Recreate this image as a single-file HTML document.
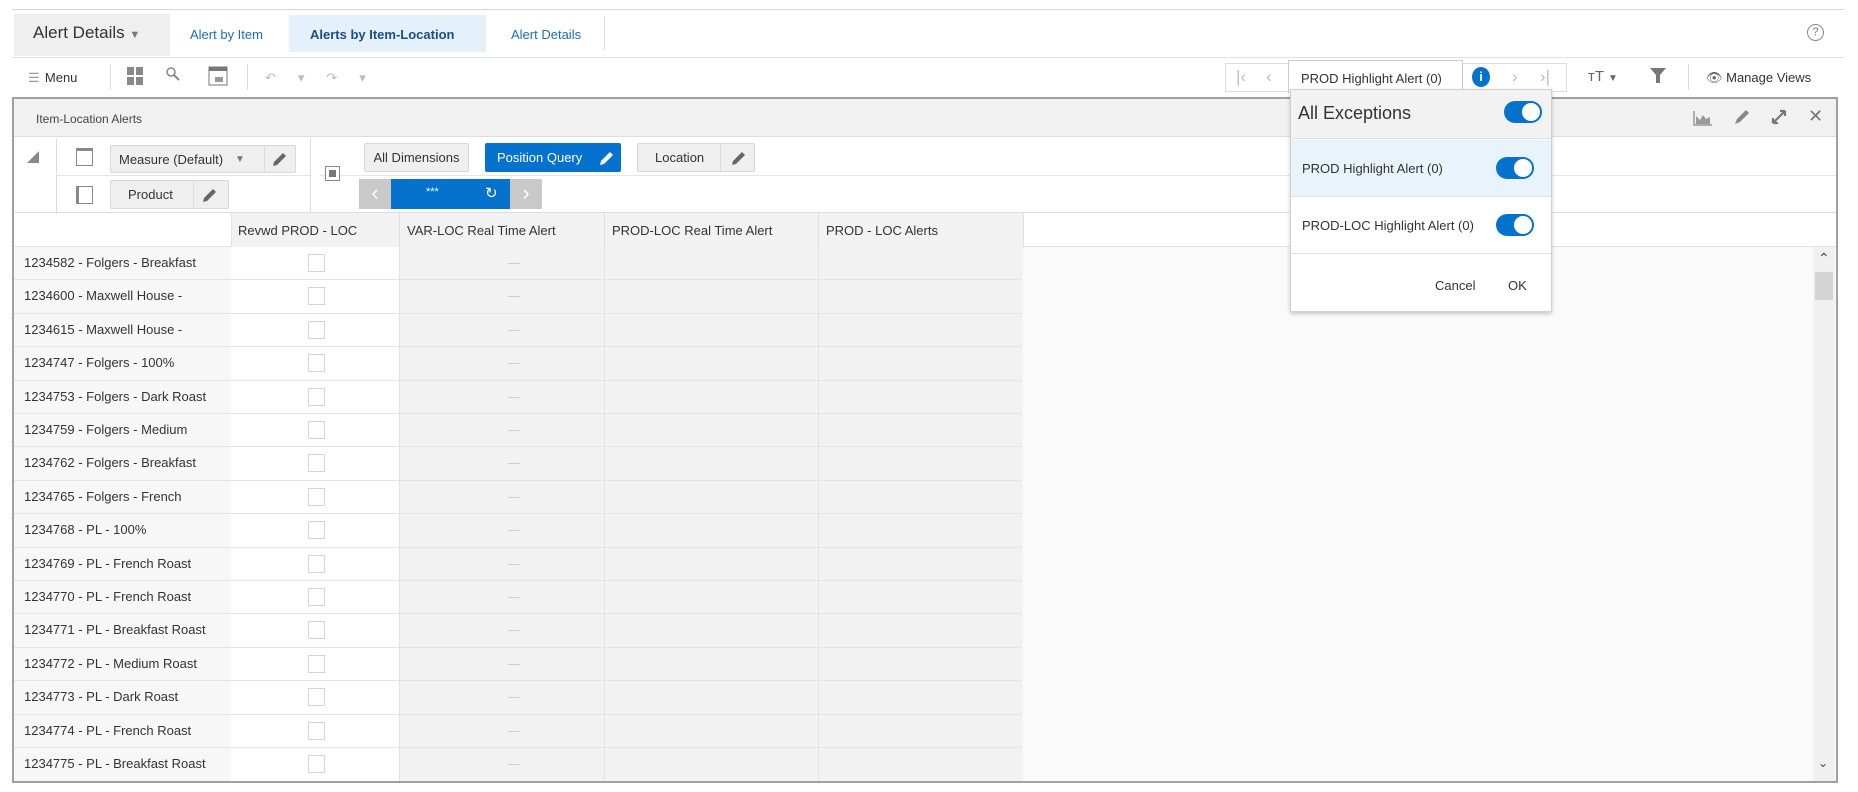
<!DOCTYPE html>
<html><head><meta charset="utf-8"><style>
*{box-sizing:border-box;margin:0;padding:0}
body{width:1858px;height:792px;background:#fff;font-family:"Liberation Sans",sans-serif;color:#333;position:relative;overflow:hidden;font-size:13px}
.a{position:absolute}
.btn{position:absolute;background:#efefef;border:1px solid #d8d8d8;border-radius:2px;font-size:13px;color:#333;display:flex;align-items:center}
.row{position:absolute;left:14px;height:33.4px;width:1008px;border-bottom:1px solid #e4e4e4}
.rh{position:absolute;left:0;top:0;width:217px;height:100%;background:#f7f7f7;padding:8px 0 0 10px;font-size:13px;color:#333;white-space:nowrap;overflow:hidden}
.c1{position:absolute;left:217px;width:168px;height:100%;background:#fff}
.cb{position:absolute;left:294px;top:7px;width:17px;height:18px;border:1px solid #d4d4d4;background:#fff}
.g{position:absolute;height:100%;background:#f2f2f2;border-left:1px solid #e2e2e2}
.dash{position:absolute;left:494px;top:16px;width:12px;height:1px;background:#cfcfcf}
.tog{position:absolute;width:38px;height:22px;border-radius:11px;background:#0572ce}
.tog:after{content:"";position:absolute;right:2px;top:2px;width:18px;height:18px;border-radius:50%;background:#fff}
</style></head><body>
<!-- top tab bar -->
<div class="a" style="left:12px;top:9px;width:1832px;height:1px;background:#d6d6d6"></div>
<div class="a" style="left:14px;top:14px;width:156px;height:42px;background:#efefef"></div>
<div class="a" style="left:33px;top:23px;font-size:17px;color:#333">Alert Details <span style="font-size:11px;color:#777">▼</span></div>
<div class="a" style="left:190px;top:27px;font-size:13px;color:#1a6fb5">Alert by Item</div>
<div class="a" style="left:289px;top:15px;width:197px;height:37px;background:#e4f0fa"></div>
<div class="a" style="left:310px;top:27px;font-size:13px;font-weight:bold;color:#1a4f80">Alerts by Item-Location</div>
<div class="a" style="left:511px;top:27px;font-size:13px;color:#1a6fb5">Alert Details</div>
<div class="a" style="left:604px;top:16px;width:1px;height:34px;background:#ddd"></div>
<div class="a" style="left:1807px;top:24px;width:17px;height:17px;border:1px solid #888;border-radius:50%;font-size:11px;text-align:center;line-height:15px;color:#777">?</div>
<div class="a" style="left:12px;top:57px;width:1832px;height:1px;background:#e0e0e0"></div>
<!-- toolbar -->
<div class="a" style="left:28px;top:70px;font-size:13px;color:#333"><span style="color:#999;letter-spacing:-2px">☰</span> &nbsp;Menu</div>
<div class="a" style="left:110px;top:64px;width:1px;height:26px;background:#ddd"></div>
<svg class="a" style="left:126px;top:66px" width="18" height="20"><rect x="1" y="1" width="7" height="8" fill="#888"/><rect x="10" y="1" width="7" height="8" fill="#888"/><rect x="1" y="11" width="7" height="8" fill="#888"/><rect x="10" y="11" width="7" height="8" fill="#888"/></svg>
<svg class="a" style="left:166px;top:67px" width="14" height="14"><circle cx="5" cy="5" r="4" fill="none" stroke="#888" stroke-width="1.5"/><line x1="8" y1="8" x2="13" y2="13" stroke="#888" stroke-width="2"/></svg>
<svg class="a" style="left:208px;top:66px" width="20" height="20"><rect x="1" y="1" width="18" height="18" fill="#fff" stroke="#777"/><rect x="1" y="1" width="18" height="4" fill="#777"/><rect x="7" y="11" width="8" height="5" fill="#999"/></svg>
<div class="a" style="left:247px;top:64px;width:1px;height:26px;background:#ddd"></div>
<div class="a" style="left:265px;top:70px;font-size:13px;color:#bbb;letter-spacing:22px">↶▾↷▾</div>
<!-- right nav -->
<div class="a" style="left:1225px;top:63px;width:342px;height:29px;border:1px solid #ddd;background:#fff"></div>
<div class="a" style="left:1236px;top:67px;font-size:17px;color:#bbb">|‹</div>
<div class="a" style="left:1266px;top:67px;font-size:17px;color:#bbb">‹</div>
<div class="a" style="left:1288px;top:60px;width:175px;height:33px;border:1px solid #ccc;border-bottom:none;background:#fff;font-size:13px;padding:10px 0 0 12px">PROD Highlight Alert (0)</div>
<div class="a" style="left:1472px;top:67px;width:18px;height:20px;border-radius:50%;background:#0572ce;color:#fff;font-size:13px;font-weight:bold;text-align:center;line-height:20px">i</div>
<div class="a" style="left:1512px;top:67px;font-size:17px;color:#bbb">›</div>
<div class="a" style="left:1540px;top:67px;font-size:17px;color:#bbb">›|</div>
<div class="a" style="left:1588px;top:68px;font-size:15px;color:#666">ᴛT <span style="font-size:10px">▼</span></div>
<svg class="a" style="left:1650px;top:68px" width="16" height="16"><path d="M0 0H16L10 7V15H6V7Z" fill="#777"/></svg>
<div class="a" style="left:1688px;top:64px;width:1px;height:26px;background:#ddd"></div>
<div class="a" style="left:1706px;top:70px;font-size:13px;color:#333"><span style="color:#666">👁</span> Manage Views</div>
<!-- panel -->
<div class="a" style="left:12px;top:97px;width:1826px;height:686px;border:2px solid #a0a0a0;background:#fafafa"></div>
<div class="a" style="left:14px;top:99px;width:1822px;height:38px;background:#f1f1f1;border-bottom:1px solid #ddd"></div>
<div class="a" style="left:36px;top:112px;font-size:12px;color:#444">Item-Location Alerts</div>
<svg class="a" style="left:1693px;top:110px" width="20" height="16"><path d="M1 1V15H19" stroke="#999" fill="none" stroke-width="1.5"/><path d="M3 14V6L7 10L10 5L13 9L17 7V14Z" fill="#999"/></svg>
<svg class="a" style="left:1733px;top:108px" width="18" height="18"><path d="M2 16L4 11L13 2L16 5L7 14Z" fill="#888"/></svg>
<svg class="a" style="left:1770px;top:108px" width="18" height="18"><path d="M3 15L15 3M15 3H10M15 3V8M3 15H8M3 15V10" stroke="#777" stroke-width="2.2" fill="none"/></svg>
<div class="a" style="left:1808px;top:106px;font-size:18px;color:#777">✕</div>
<!-- pivot area -->
<div class="a" style="left:14px;top:137px;width:1822px;height:76px;background:#fff;border-bottom:1px solid #ddd"></div>
<div class="a" style="left:27px;top:151px;width:0;height:0;border-left:12px solid transparent;border-bottom:12px solid #888"></div>
<div class="a" style="left:56px;top:138px;width:1px;height:75px;background:#ddd"></div>
<div class="a" style="left:310px;top:138px;width:1px;height:75px;background:#ddd"></div>
<div class="a" style="left:56px;top:175px;width:254px;height:1px;background:#e5e5e5"></div>
<div class="a" style="left:320px;top:175px;width:1516px;height:1px;background:#e5e5e5"></div>
<div class="a" style="left:76px;top:148px;width:17px;height:18px;border:1px solid #888;border-top:3px solid #888;background:#fff"></div>
<div class="a" style="left:76px;top:186px;width:17px;height:18px;border:1px solid #888;border-left:3px solid #888;background:#fff"></div>
<div class="btn" style="left:110px;top:145px;width:186px;height:28px"><span style="padding-left:8px">Measure (Default)</span><span style="margin-left:12px;font-size:10px;color:#777">▼</span><span style="position:absolute;left:153px;top:0;width:1px;height:26px;background:#ddd"></span><svg style="position:absolute;left:160px;top:5px" width="16" height="16"><path d="M2 15L3 11L12 2L15 5L6 14Z" fill="#666"/></svg></div>
<div class="btn" style="left:110px;top:180px;width:119px;height:29px"><span style="padding-left:17px">Product</span><span style="position:absolute;left:82px;top:0;width:1px;height:27px;background:#ddd"></span><svg style="position:absolute;left:90px;top:6px" width="16" height="16"><path d="M2 15L3 11L12 2L15 5L6 14Z" fill="#666"/></svg></div>
<div class="a" style="left:325px;top:166px;width:15px;height:15px;border:1px solid #888;background:#fff"><div style="margin:3px;width:7px;height:7px;background:#777"></div></div>
<div class="btn" style="left:364px;top:143px;width:105px;height:29px;justify-content:center">All Dimensions</div>
<div class="btn" style="left:485px;top:143px;width:136px;height:29px;background:#0572ce;border-color:#0572ce;color:#fff;padding-left:11px">Position Query<svg style="position:absolute;left:112px;top:6px" width="16" height="16"><path d="M2 15L3 11L12 2L15 5L6 14Z" fill="#fff"/></svg></div>
<div class="btn" style="left:637px;top:143px;width:118px;height:29px"><span style="padding-left:17px">Location</span><span style="position:absolute;left:82px;top:0;width:1px;height:27px;background:#ddd"></span><svg style="position:absolute;left:92px;top:6px" width="16" height="16"><path d="M2 15L3 11L12 2L15 5L6 14Z" fill="#666"/></svg></div>
<div class="a" style="left:359px;top:179px;width:32px;height:30px;background:#c9c9c9;color:#fff;font-size:22px;text-align:center;line-height:28px">‹</div>
<div class="a" style="left:391px;top:179px;width:119px;height:30px;background:#0572ce;color:#fff;font-size:11px;padding:7px 0 0 35px">***<span style="position:absolute;left:94px;top:5px;font-size:15px">↻</span></div>
<div class="a" style="left:510px;top:179px;width:32px;height:30px;background:#c9c9c9;color:#fff;font-size:22px;text-align:center;line-height:28px">›</div>
<!-- header row -->
<div class="a" style="left:14px;top:213px;width:1822px;height:34px;background:#fff;border-bottom:1px solid #e4e4e4"></div>
<div class="a" style="left:231px;top:213px;width:792px;height:34px;background:#f2f2f2"></div>
<div class="a" style="left:231px;top:213px;width:1px;height:568px;background:#e4e4e4"></div>
<div class="a" style="left:399px;top:213px;width:1px;height:34px;background:#e0e0e0"></div>
<div class="a" style="left:604px;top:213px;width:1px;height:34px;background:#e0e0e0"></div>
<div class="a" style="left:818px;top:213px;width:1px;height:34px;background:#e0e0e0"></div>
<div class="a" style="left:1023px;top:213px;width:1px;height:34px;background:#e0e0e0"></div>
<div class="a" style="left:238px;top:223px;font-size:13px">Revwd PROD - LOC</div>
<div class="a" style="left:407px;top:223px;font-size:13px">VAR-LOC Real Time Alert</div>
<div class="a" style="left:612px;top:223px;font-size:13px">PROD-LOC Real Time Alert</div>
<div class="a" style="left:826px;top:223px;font-size:13px">PROD - LOC Alerts</div>
<!-- rows -->
<div id="rows"></div>
<div class="row" style="top:247.0px"><div class="rh">1234582 - Folgers - Breakfast</div><div class="c1"></div><div class="cb"></div><div class="g" style="left:385px;width:205px"></div><div class="g" style="left:590px;width:214px"></div><div class="g" style="left:804px;width:205px"></div><div class="dash"></div></div>
<div class="row" style="top:280.4px"><div class="rh">1234600 - Maxwell House -</div><div class="c1"></div><div class="cb"></div><div class="g" style="left:385px;width:205px"></div><div class="g" style="left:590px;width:214px"></div><div class="g" style="left:804px;width:205px"></div><div class="dash"></div></div>
<div class="row" style="top:313.8px"><div class="rh">1234615 - Maxwell House -</div><div class="c1"></div><div class="cb"></div><div class="g" style="left:385px;width:205px"></div><div class="g" style="left:590px;width:214px"></div><div class="g" style="left:804px;width:205px"></div><div class="dash"></div></div>
<div class="row" style="top:347.2px"><div class="rh">1234747 - Folgers - 100%</div><div class="c1"></div><div class="cb"></div><div class="g" style="left:385px;width:205px"></div><div class="g" style="left:590px;width:214px"></div><div class="g" style="left:804px;width:205px"></div><div class="dash"></div></div>
<div class="row" style="top:380.6px"><div class="rh">1234753 - Folgers - Dark Roast</div><div class="c1"></div><div class="cb"></div><div class="g" style="left:385px;width:205px"></div><div class="g" style="left:590px;width:214px"></div><div class="g" style="left:804px;width:205px"></div><div class="dash"></div></div>
<div class="row" style="top:414.0px"><div class="rh">1234759 - Folgers - Medium</div><div class="c1"></div><div class="cb"></div><div class="g" style="left:385px;width:205px"></div><div class="g" style="left:590px;width:214px"></div><div class="g" style="left:804px;width:205px"></div><div class="dash"></div></div>
<div class="row" style="top:447.4px"><div class="rh">1234762 - Folgers - Breakfast</div><div class="c1"></div><div class="cb"></div><div class="g" style="left:385px;width:205px"></div><div class="g" style="left:590px;width:214px"></div><div class="g" style="left:804px;width:205px"></div><div class="dash"></div></div>
<div class="row" style="top:480.8px"><div class="rh">1234765 - Folgers - French</div><div class="c1"></div><div class="cb"></div><div class="g" style="left:385px;width:205px"></div><div class="g" style="left:590px;width:214px"></div><div class="g" style="left:804px;width:205px"></div><div class="dash"></div></div>
<div class="row" style="top:514.2px"><div class="rh">1234768 - PL - 100%</div><div class="c1"></div><div class="cb"></div><div class="g" style="left:385px;width:205px"></div><div class="g" style="left:590px;width:214px"></div><div class="g" style="left:804px;width:205px"></div><div class="dash"></div></div>
<div class="row" style="top:547.6px"><div class="rh">1234769 - PL - French Roast</div><div class="c1"></div><div class="cb"></div><div class="g" style="left:385px;width:205px"></div><div class="g" style="left:590px;width:214px"></div><div class="g" style="left:804px;width:205px"></div><div class="dash"></div></div>
<div class="row" style="top:581.0px"><div class="rh">1234770 - PL - French Roast</div><div class="c1"></div><div class="cb"></div><div class="g" style="left:385px;width:205px"></div><div class="g" style="left:590px;width:214px"></div><div class="g" style="left:804px;width:205px"></div><div class="dash"></div></div>
<div class="row" style="top:614.4px"><div class="rh">1234771 - PL - Breakfast Roast</div><div class="c1"></div><div class="cb"></div><div class="g" style="left:385px;width:205px"></div><div class="g" style="left:590px;width:214px"></div><div class="g" style="left:804px;width:205px"></div><div class="dash"></div></div>
<div class="row" style="top:647.8px"><div class="rh">1234772 - PL - Medium Roast</div><div class="c1"></div><div class="cb"></div><div class="g" style="left:385px;width:205px"></div><div class="g" style="left:590px;width:214px"></div><div class="g" style="left:804px;width:205px"></div><div class="dash"></div></div>
<div class="row" style="top:681.2px"><div class="rh">1234773 - PL - Dark Roast</div><div class="c1"></div><div class="cb"></div><div class="g" style="left:385px;width:205px"></div><div class="g" style="left:590px;width:214px"></div><div class="g" style="left:804px;width:205px"></div><div class="dash"></div></div>
<div class="row" style="top:714.6px"><div class="rh">1234774 - PL - French Roast</div><div class="c1"></div><div class="cb"></div><div class="g" style="left:385px;width:205px"></div><div class="g" style="left:590px;width:214px"></div><div class="g" style="left:804px;width:205px"></div><div class="dash"></div></div>
<div class="row" style="top:748.0px;height:33px;border-bottom:none"><div class="rh">1234775 - PL - Breakfast Roast</div><div class="c1"></div><div class="cb"></div><div class="g" style="left:385px;width:205px"></div><div class="g" style="left:590px;width:214px"></div><div class="g" style="left:804px;width:205px"></div><div class="dash"></div></div>
<!-- scrollbar -->
<div class="a" style="left:1813px;top:247px;width:22px;height:534px;background:#f0f0f0"></div>
<div class="a" style="left:1818px;top:250px;font-size:14px;color:#444">⌃</div>
<div class="a" style="left:1815px;top:272px;width:18px;height:28px;background:#d4d4d4"></div>
<div class="a" style="left:1818px;top:756px;font-size:12px;color:#444">⌄</div>
<!-- popup -->
<div class="a" style="left:1290px;top:89px;width:262px;height:223px;background:#fff;border:1px solid #d0d0d0;box-shadow:0 2px 4px rgba(0,0,0,.2)">
<div class="a" style="left:0;top:0;width:260px;height:49px;background:#f2f2f2;border-bottom:1px solid #e0e0e0"></div>
<div class="a" style="left:7px;top:13px;font-size:18px;color:#333">All Exceptions</div>
<div class="tog" style="left:213px;top:11px"></div>
<div class="a" style="left:0;top:50px;width:260px;height:57px;background:#e9f3fb;border-bottom:1px solid #e0e0e0"></div>
<div class="a" style="left:11px;top:71px;font-size:13px;color:#333">PROD Highlight Alert (0)</div>
<div class="tog" style="left:205px;top:67px"></div>
<div class="a" style="left:0;top:107px;width:260px;height:57px;border-bottom:1px solid #e0e0e0"></div>
<div class="a" style="left:11px;top:128px;font-size:13px;color:#333">PROD-LOC Highlight Alert (0)</div>
<div class="tog" style="left:205px;top:124px"></div>
<div class="a" style="left:144px;top:188px;font-size:13px;color:#333">Cancel</div>
<div class="a" style="left:217px;top:188px;font-size:13px;color:#333">OK</div>
</div>
</body></html>
